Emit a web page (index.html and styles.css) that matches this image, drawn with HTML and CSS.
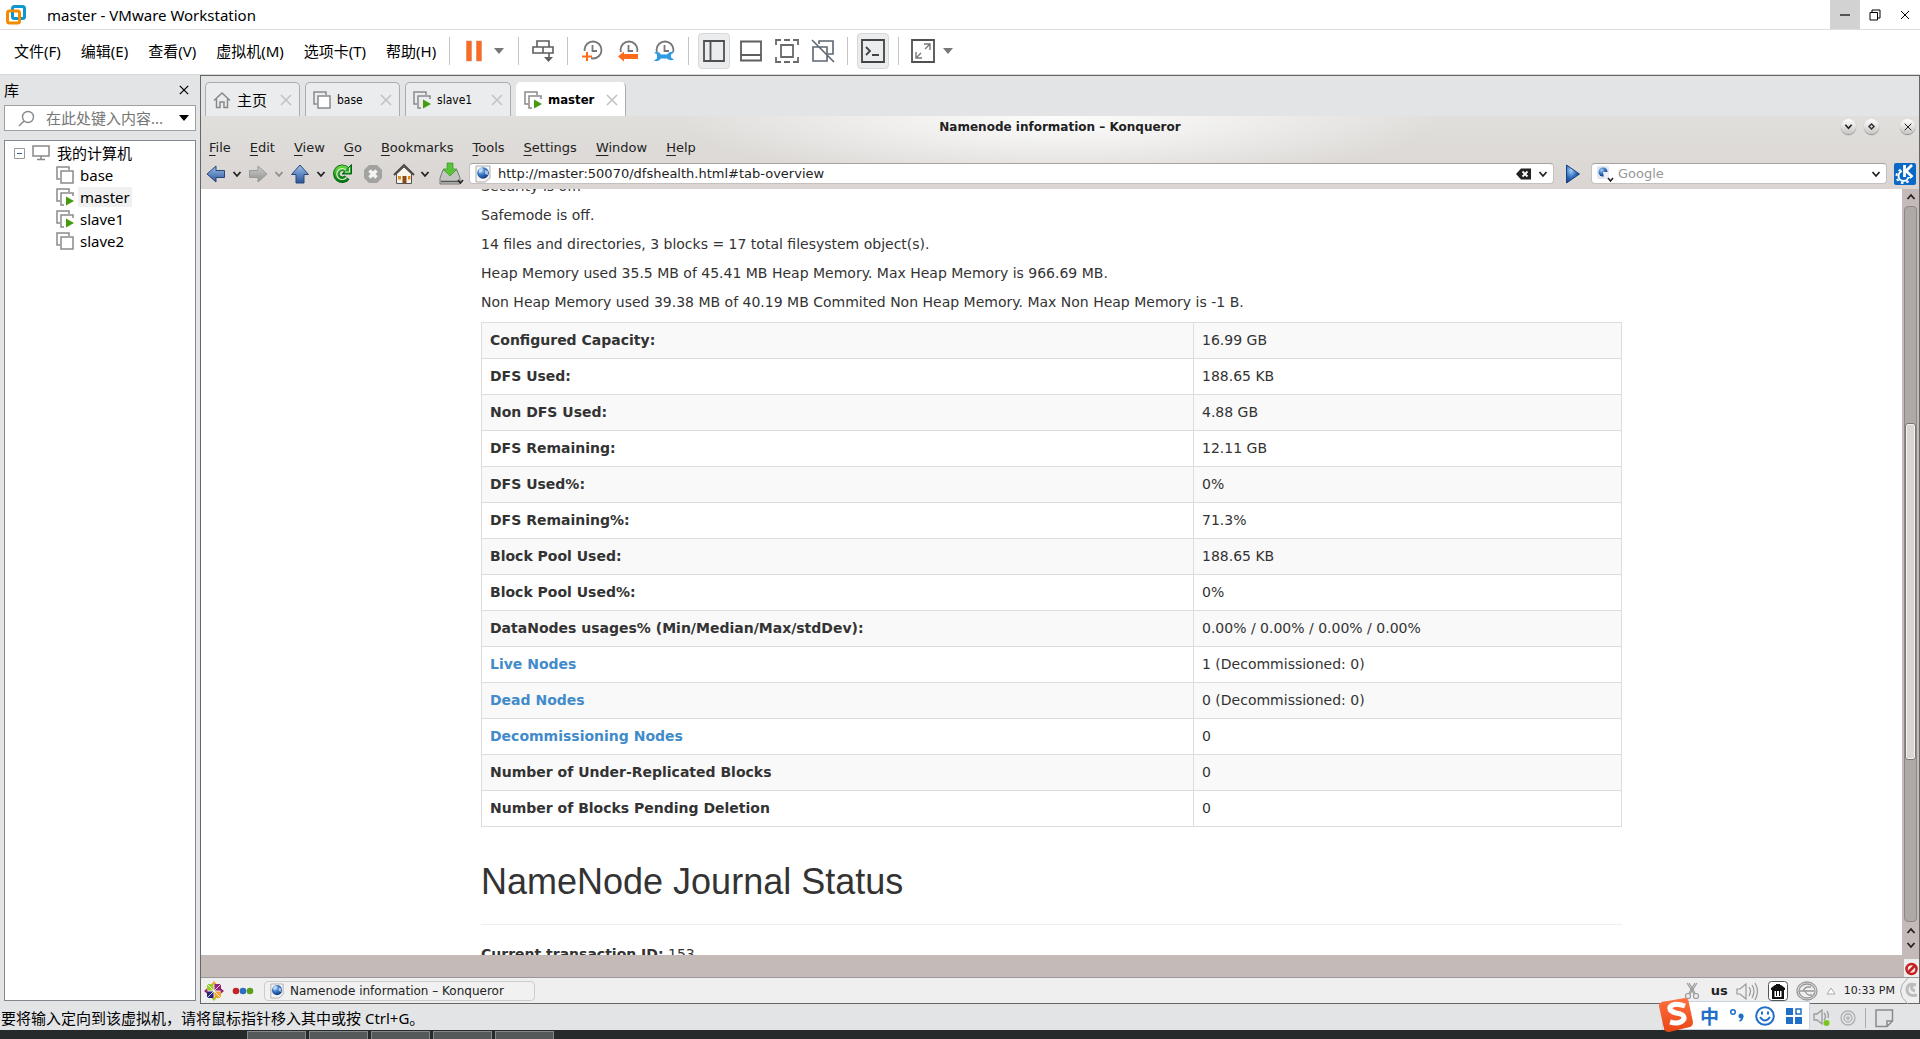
FILE: index.html
```html
<!DOCTYPE html>
<html lang="zh-CN">
<head>
<meta charset="utf-8">
<title>master - VMware Workstation</title>
<link rel="stylesheet" href="styles.css">
</head>
<body>
<svg class="defs" aria-hidden="true">
  <defs>
    <linearGradient id="blue" x1="0" y1="0" x2="0" y2="1"><stop offset="0" stop-color="#9cc0ee"/><stop offset="1" stop-color="#2c5596"/></linearGradient>
    <linearGradient id="grey" x1="0" y1="0" x2="0" y2="1"><stop offset="0" stop-color="#cfcfcd"/><stop offset="1" stop-color="#8e8e8c"/></linearGradient>
    <linearGradient id="green" x1="0" y1="0" x2="0" y2="1"><stop offset="0" stop-color="#5fd040"/><stop offset="1" stop-color="#077a12"/></linearGradient>
    <radialGradient id="ball" cx=".35" cy=".3" r=".8"><stop offset="0" stop-color="#a9cdf5"/><stop offset=".5" stop-color="#2f6fc0"/><stop offset="1" stop-color="#0b2c6b"/></radialGradient>
    <linearGradient id="sogou" x1="0" y1="0" x2="0" y2="1"><stop offset="0" stop-color="#ff7040"/><stop offset="1" stop-color="#ea4615"/></linearGradient>
    <symbol id="vm" viewBox="0 0 18 18"><path d="M4 13H1V1h12v3" fill="none" stroke="#8a8a8a" stroke-width="1.5"/><rect x="5" y="5" width="12" height="12" fill="#fff" stroke="#8a8a8a" stroke-width="1.5"/></symbol>
    <symbol id="vmrun" viewBox="0 0 18 18"><path d="M4 13H1V1h12v3M8 17H5V5h12v3" fill="none" stroke="#8a8a8a" stroke-width="1.5"/><path d="M10 8.500l8 4.500-8 4.500z" fill="#469a0e"/></symbol>
    <symbol id="chev" viewBox="0 0 10 10"><path d="M1.500 3l3.500 4 3.500-4" fill="none" stroke="currentColor" stroke-width="1.800"/></symbol>
    <symbol id="caret" viewBox="0 0 10 6"><path d="M0 0h10L5 6z" fill="currentColor"/></symbol>
    <symbol id="x" viewBox="0 0 12 12"><path d="M1 1l10 10M11 1L1 11" fill="none" stroke="currentColor" stroke-width="1.500"/></symbol>
    <symbol id="clock" viewBox="0 0 22 22"><circle cx="12" cy="10" r="8.500" fill="none" stroke="#777" stroke-width="1.800"/><path d="M11.500 5v6H16" fill="none" stroke="#777" stroke-width="1.800"/></symbol>
    <symbol id="globe" viewBox="0 0 16 18"><path d="M1 1h14v12l-5 4H1z" fill="#f6f6f6" stroke="#aaa"/><circle cx="8" cy="8" r="5.800" fill="url(#ball)"/><path d="M4 4q3-2 4 0l-1 3-3 1zM10 5l3 1v4l-3-1z" fill="#cfe3fa" opacity=".75"/></symbol>
  </defs>
</svg>

<header class="titlebar">
  <svg class="logo" viewBox="0 0 20 20"><rect x="6.500" y="1.500" width="12" height="12" rx="2" fill="none" stroke="#0f95cf" stroke-width="3"/><rect x="1.500" y="6" width="12" height="12" rx="2" fill="none" stroke="#f38b00" stroke-width="3"/><path d="M6.500 7v5q0 1.500 1.500 1.500h4" fill="none" stroke="#0f95cf" stroke-width="2"/></svg>
  <h1 class="apptitle">master - VMware Workstation</h1>
  <div class="winbtns">
    <button class="winbtn minimize" aria-label="最小化"><svg width="12" height="12"><path d="M1 6h10" stroke="#000" stroke-width="1.200"/></svg></button>
    <button class="winbtn" aria-label="还原"><svg width="12" height="12"><path d="M1 3.500h7.500V11H1zM3 3V1h8v8H9" fill="none" stroke="#000"/></svg></button>
    <button class="winbtn" aria-label="关闭"><svg width="12" height="12"><path d="M2 2l8 8M10 2l-8 8" stroke="#000"/></svg></button>
  </div>
</header>

<div class="menubar">
  <nav class="hostmenu">
    <button>文件(F)</button><button>编辑(E)</button><button>查看(V)</button><button>虚拟机(M)</button><button>选项卡(T)</button><button>帮助(H)</button>
  </nav>
  <div class="tools">
    <span class="sep"></span>
    <button class="tool" aria-label="暂停"><svg width="18" height="22"><path d="M1.500 1h5v20h-5zM11.500 1h5v20h-5z" fill="#ff6a1c" stroke="#c98e6d" stroke-width=".6"/></svg></button>
    <button class="drop" aria-label="电源选项"><svg width="10" height="6"><use href="#caret"/></svg></button>
    <span class="sep"></span>
    <button class="tool" aria-label="发送按键"><svg width="22" height="22" viewBox="0 0 22 22" fill="none" stroke="#5e5e60" stroke-width="1.600"><path d="M5 7V1h12v6M1 7h10v6H1zM11 7h10v6H11zM17 13v6"/><path d="M12 17h9l-4.500 5z" fill="#5e5e60" stroke="none"/></svg></button>
    <span class="sep"></span>
    <div class="group">
      <button class="tool" aria-label="拍摄快照"><svg width="22" height="22"><use href="#clock"/><path d="M0 11h10v9H0z" fill="#fff"/><path d="M6 12v9M1 16.500h10" stroke="#ff6a1c" stroke-width="2"/></svg></button>
      <button class="tool" aria-label="恢复快照"><svg width="22" height="22"><use href="#clock"/><path d="M0 12h22v10H0z" fill="#fff"/><path d="M1 16.500l6-5V14h14v5H7v2.500z" fill="#ff6a1c"/></svg></button>
      <button class="tool" aria-label="管理快照"><svg width="22" height="22"><use href="#clock"/><path d="M0 12h22v10H0z" fill="#fff"/><path d="M1 12.500q5-1.500 7 2h6q3-4 7-2l-3 2v3l3 2q-4 2-7-1H8q-3 4-7 2l3-2v-4z" fill="#2f9be0"/></svg></button>
    </div>
    <span class="sep"></span>
    <div class="group">
      <button class="tool on" aria-label="显示库"><svg width="22" height="22"><path d="M1 1h20v20H1zM7.500 1v20" fill="none" stroke="#505052" stroke-width="1.800"/></svg></button>
      <button class="tool" aria-label="缩略图栏"><svg width="22" height="22"><path d="M1 1.500h20v19H1zM1 15h20" fill="none" stroke="#5e5e60" stroke-width="1.800"/></svg></button>
      <button class="tool" aria-label="全屏"><svg width="24" height="24"><path d="M1 6V1h5M9 1h6M18 1h5v5M23 18v5h-5M15 23H9M6 23H1v-5M6 6h12v12H6z" fill="none" stroke="#6a6a6c" stroke-width="1.800"/></svg></button>
      <button class="tool" aria-label="Unity"><svg width="24" height="24" fill="none" stroke="#5e6670" stroke-width="1.600"><path d="M8 5V2h14v13h-5M2 8h14v14H2zM1 1l22 22"/></svg></button>
    </div>
    <span class="sep"></span>
    <button class="tool on" aria-label="控制台视图"><svg width="24" height="24" fill="none" stroke="#434345" stroke-width="1.800"><path d="M1 1h22v22H1z"/><path d="M5 8l4 4-4 4M11 16h7"/></svg></button>
    <span class="sep"></span>
    <button class="tool" aria-label="自由拉伸"><svg width="24" height="24" fill="none" stroke="#505052" stroke-width="1.800"><path d="M1 1h22v22H1z"/><path d="M5 13v6h6M13 5h6v6M19 5l-5 5M5 19l5-5" stroke-width="1.400" stroke="#777"/></svg></button>
    <button class="drop" aria-label="拉伸选项"><svg width="10" height="6"><use href="#caret"/></svg></button>
  </div>
</div>

<main class="workspace">
  <aside class="library">
    <div class="libhead"><h2>库</h2><button aria-label="关闭库"><svg width="10" height="10"><use href="#x"/></svg></button></div>
    <div class="search">
      <svg width="17" height="17" fill="none" stroke="#888" stroke-width="1.400"><circle cx="10" cy="7" r="5.500"/><path d="M6 11l-5 5"/></svg>
      <input type="text" aria-label="搜索" placeholder="在此处键入内容...">
      <svg class="black" width="12" height="6"><use href="#caret"/></svg>
    </div>
    <ul class="tree">
      <li class="root"><svg width="11" height="11"><path d="M.5.500h10v10H.5z" fill="#fff" stroke="#999"/><path d="M3 5.500h5" stroke="#3c5aa0"/></svg><svg width="18" height="16" fill="none" stroke="#888" stroke-width="1.500"><path d="M1 1h16v10H1zM9 11v3M5 14.500h8"/></svg><span>我的计算机</span></li>
      <li><svg width="18" height="18"><use href="#vm"/></svg><span>base</span></li>
      <li><svg width="18" height="18"><use href="#vmrun"/></svg><span class="current">master</span></li>
      <li><svg width="18" height="18"><use href="#vmrun"/></svg><span>slave1</span></li>
      <li><svg width="18" height="18"><use href="#vm"/></svg><span>slave2</span></li>
    </ul>
  </aside>

  <section class="console">
    <div class="tabs">
      <div class="tab"><svg width="18" height="18" fill="none" stroke="#888" stroke-width="1.500"><path d="M1 9.500L9 2l8 7.500M3.500 8v8.500H7V11h4v5.500h3.500V8"/></svg><span class="cjk">主页</span><button aria-label="关闭"><svg width="12" height="12"><use href="#x"/></svg></button></div>
      <div class="tab"><svg width="18" height="18"><use href="#vm"/></svg><span>base</span><button aria-label="关闭"><svg width="12" height="12"><use href="#x"/></svg></button></div>
      <div class="tab wide"><svg width="18" height="18"><use href="#vmrun"/></svg><span>slave1</span><button aria-label="关闭"><svg width="12" height="12"><use href="#x"/></svg></button></div>
      <div class="tab active"><svg width="18" height="18"><use href="#vmrun"/></svg><span>master</span><button aria-label="关闭"><svg width="12" height="12"><use href="#x"/></svg></button></div>
    </div>

    <div class="guest">
      <div class="chrome">
        <div class="gtitle">
          <h2>Namenode information – Konqueror</h2>
          <div class="orbs">
            <button class="orb" aria-label="Minimize"><svg width="9" height="9"><use href="#chev"/></svg></button>
            <button class="orb" aria-label="Maximize"><svg width="9" height="9"><path d="M4.500 2L7 4.500 4.500 7 2 4.500z" fill="none" stroke="#333" stroke-width="1.500"/></svg></button>
            <button class="orb last" aria-label="Close"><svg width="8" height="8"><use href="#x"/></svg></button>
          </div>
        </div>
        <nav class="gmenu">
          <button><u>F</u>ile</button><button><u>E</u>dit</button><button><u>V</u>iew</button><button><u>G</u>o</button><button><u>B</u>ookmarks</button><button><u>T</u>ools</button><button><u>S</u>ettings</button><button><u>W</u>indow</button><button><u>H</u>elp</button>
        </nav>
        <div class="gtools">
          <div class="navs">
            <button class="nav" aria-label="Back"><svg width="20" height="20"><path d="M1 10l9-8v4.500h8.500v7H10V18z" fill="url(#blue)" stroke="#27477c"/></svg></button>
            <button class="more" aria-label="Back history"><svg width="10" height="10"><use href="#chev"/></svg></button>
            <button class="nav" aria-label="Forward"><svg width="20" height="20"><path d="M19 10l-9-8v4.500H1.500v7H10V18z" fill="url(#grey)" stroke="#999"/></svg></button>
            <button class="more dim" aria-label="Forward history"><svg width="10" height="10"><use href="#chev"/></svg></button>
            <button class="nav" aria-label="Up"><svg width="20" height="20"><path d="M10 1l8.500 9.500H14V19H6v-8.500H1.500z" fill="url(#blue)" stroke="#27477c"/></svg></button>
            <button class="more" aria-label="Up levels"><svg width="10" height="10"><use href="#chev"/></svg></button>
            <button class="nav" aria-label="Reload"><svg width="20" height="20"><path d="M15 13.500a6 6 0 1 1-.5-8" fill="none" stroke="#056313" stroke-width="6.500"/><path d="M19.500.500v9.500H10z" fill="#1d9a20" stroke="#056313"/><path d="M15 13.500a6 6 0 1 1-.5-8" fill="none" stroke="url(#green)" stroke-width="5"/><path d="M14.500 13.500a5.500 5.500 0 1 1-.5-7.500M17.500 3.500V8H13" fill="none" stroke="#d6f5cc" stroke-width="1.200"/></svg></button>
            <button class="nav gapped" aria-label="Stop"><svg width="20" height="20"><path d="M6 1h8l5 5v8l-5 5H6l-5-5V6z" fill="#a2a2a0"/><path d="M6.500 6.500l7 7M13.500 6.500l-7 7" stroke="#f4f4f4" stroke-width="3.500"/></svg></button>
            <button class="nav gapped" aria-label="Home"><svg width="22" height="22"><path d="M3.500 11v9.500h15V11L11 4z" fill="#f8f4ea" stroke="#555"/><path d="M1 12L11 2l10 10" fill="none" stroke="#444" stroke-width="1.800"/><path d="M9.500 13h4v7h-4z" fill="#8a4a16"/><path d="M5 13h3v3.500H5zM15 13h2.500v3.500H15z" fill="#e08a20"/></svg></button>
            <button class="more" aria-label="Home options"><svg width="10" height="10"><use href="#chev"/></svg></button>
            <button class="nav save" aria-label="Save"><svg width="25" height="24"><path d="M4 8h14l3 8v6H1v-6z" fill="#c4c4c2" stroke="#777"/><path d="M2 19.500h18" stroke="#555" stroke-width="1.500"/><path d="M8 1h6v6h4l-7 7-7-7h4z" fill="#58c43a" stroke="#3d9427" stroke-width=".7"/><path d="M19 18l2.500 3 2.500-3" fill="none" stroke="#222" stroke-width="1.500"/></svg></button>
          </div>
          <div class="field address">
            <svg width="16" height="18"><use href="#globe"/></svg>
            <input type="text" aria-label="Location" value="http://master:50070/dfshealth.html#tab-overview">
            <svg width="15" height="12"><path d="M0 6l5-5.500h10v11H5z" fill="#222"/><path d="M6.500 3.500l5 5M11.500 3.500l-5 5" stroke="#fff" stroke-width="1.800"/></svg>
            <svg width="10" height="10"><use href="#chev"/></svg>
          </div>
          <button class="go" aria-label="Go"><svg width="16" height="20"><path d="M1.500 1l13 9-13 9z" fill="url(#ball)" stroke="#17417f"/></svg></button>
          <div class="field websearch">
            <svg width="18" height="18"><rect x="0" y="1" width="12" height="13" rx="2" fill="#e2e6ee"/><circle cx="6" cy="7" r="4.500" fill="url(#ball)"/><path d="M6 7h6v6H7z" fill="#eceff5"/><path d="M11 13l2.500 3 2.500-3" fill="none" stroke="#222" stroke-width="1.500"/></svg>
            <input type="text" aria-label="Web search" placeholder="Google">
            <svg width="10" height="10"><use href="#chev"/></svg>
          </div>
          <svg class="kde" width="22" height="22"><rect width="22" height="22" rx="2" fill="#0a68c6"/><circle cx="9.500" cy="13" r="5" fill="none" stroke="#fff" stroke-width="2"/><circle cx="9.500" cy="13" r="7" fill="none" stroke="#fff" stroke-width="2" stroke-dasharray="2.500 3"/><path d="M8 1h13v13H8z" fill="#0a68c6"/><path d="M10.500 2v12M18 2l-6 6 6.500 6" fill="none" stroke="#fff" stroke-width="2.800"/></svg>
        </div>
      </div>

      <div class="viewport">
        <article class="page">
          <div class="container">
            <p>Security is off.</p>
            <p>Safemode is off.</p>
            <p>14 files and directories, 3 blocks = 17 total filesystem object(s).</p>
            <p>Heap Memory used 35.5 MB of 45.41 MB Heap Memory. Max Heap Memory is 966.69 MB.</p>
            <p>Non Heap Memory used 39.38 MB of 40.19 MB Commited Non Heap Memory. Max Non Heap Memory is -1 B.</p>
            <table class="summary">
              <tr><th scope="row">Configured Capacity:</th><td>16.99 GB</td></tr>
              <tr><th scope="row">DFS Used:</th><td>188.65 KB</td></tr>
              <tr><th scope="row">Non DFS Used:</th><td>4.88 GB</td></tr>
              <tr><th scope="row">DFS Remaining:</th><td>12.11 GB</td></tr>
              <tr><th scope="row">DFS Used%:</th><td>0%</td></tr>
              <tr><th scope="row">DFS Remaining%:</th><td>71.3%</td></tr>
              <tr><th scope="row">Block Pool Used:</th><td>188.65 KB</td></tr>
              <tr><th scope="row">Block Pool Used%:</th><td>0%</td></tr>
              <tr><th scope="row">DataNodes usages% (Min/Median/Max/stdDev):</th><td>0.00% / 0.00% / 0.00% / 0.00%</td></tr>
              <tr><th scope="row"><a href="#tab-datanode">Live Nodes</a></th><td>1 (Decommissioned: 0)</td></tr>
              <tr><th scope="row"><a href="#tab-datanode">Dead Nodes</a></th><td>0 (Decommissioned: 0)</td></tr>
              <tr><th scope="row"><a href="#tab-datanode">Decommissioning Nodes</a></th><td>0</td></tr>
              <tr><th scope="row">Number of Under-Replicated Blocks</th><td>0</td></tr>
              <tr><th scope="row">Number of Blocks Pending Deletion</th><td>0</td></tr>
            </table>
            <h1 class="pagehead">NameNode Journal Status</h1>
            <p><b>Current transaction ID:</b> 153</p>
          </div>
        </article>
        <div class="scrollbar">
          <svg width="10" height="10"><path d="M1.500 7L5 3l3.500 4" fill="none" stroke="#222" stroke-width="1.800"/></svg>
          <div class="track"><div class="thumb"></div></div>
          <svg width="10" height="10"><path d="M1.500 7L5 3l3.500 4" fill="none" stroke="#222" stroke-width="1.800"/></svg>
          <svg width="10" height="10"><use href="#chev"/></svg>
        </div>
      </div>

      <div class="desktop"><svg width="15" height="18"><rect width="15" height="18" fill="#eee"/><circle cx="7.500" cy="10" r="5" fill="#f5e5e5" stroke="#c42020" stroke-width="2.500"/><path d="M4 13.500l7-7" stroke="#c42020" stroke-width="2.500"/></svg></div>

      <footer class="panel">
        <svg width="20" height="20" viewBox="0 0 20 20"><path d="M10 0l3 3.500H7z" fill="#f0a52c"/><path d="M20 10l-3.500 3V7z" fill="#932279"/><path d="M10 20l-3-3.500h6z" fill="#9ccd2a"/><path d="M0 10l3.500-3v6z" fill="#932279"/><path d="M3 3h6.500v6.500H3z" fill="#9ccd2a"/><path d="M10.500 3H17v6.500h-6.500z" fill="#932279"/><path d="M3 10.500h6.500V17H3z" fill="#262577"/><path d="M10.500 10.500H17V17h-6.500z" fill="#f0a52c"/><path d="M3 3l14 14M17 3L3 17" stroke="#fff" stroke-width=".8"/></svg>
        <svg width="22" height="10"><circle cx="4" cy="5" r="3.300" fill="#c32424"/><circle cx="11" cy="5" r="3.300" fill="#2b6cc4"/><circle cx="18" cy="5" r="3.300" fill="#5aa020"/></svg>
        <button class="task"><svg width="14" height="16"><use href="#globe"/></svg>Namenode information – Konqueror</button>
        <div class="tray">
          <svg width="20" height="18" fill="none" stroke="#999" stroke-width="1.200"><path d="M4 1l7 11M14 1L7 12"/><path d="M6 1l6 10M12 1L6 11"/><circle cx="5" cy="14" r="2.500"/><circle cx="13" cy="14" r="2.500"/></svg>
          <b>us</b>
          <svg width="24" height="20" fill="none" stroke="#999" stroke-width="1.200"><path d="M1 8v5h3l6 5V3L4 8z"/><path d="M13 6q3 4 0 9M16 4q4 6 0 13M19 2q5 8 0 17"/></svg>
          <svg width="20" height="20"><rect x=".5" y=".5" width="19" height="19" rx="3" fill="#fff" stroke="#555"/><path d="M3 7l4-3h1V3h4v1h1l4 3v2h-1v9H4V9H3z" fill="#111"/><path d="M6.500 10h7v6h-7z" fill="#fff"/><path d="M8.500 10v5M11.500 10v5" stroke="#111"/></svg>
          <svg width="22" height="20" fill="none" stroke="#999" stroke-width="1.300"><ellipse cx="11" cy="10" rx="10" ry="9"/><ellipse cx="11" cy="10" rx="8" ry="7"/><path d="M3 10h15M7 10q2-4 5-4h3M9 10q2 4 4 4h3"/></svg>
          <svg width="10" height="8"><path d="M5 1l4 6H1z" fill="#fff" stroke="#aaa"/></svg>
          <time>10:33 PM</time>
          <svg class="cashew" width="20" height="26" fill="none"><path d="M9 0Q-6 13 9 26" stroke="#aaa"/><path d="M17 7q-9-3-9 5 1 7 10 5M14 7q-4 4 2 6" stroke="#bcbcbc" stroke-width="3"/></svg>
        </div>
      </footer>
    </div>
  </section>
</main>

<footer class="statusbar">
  <span>要将输入定向到该虚拟机，请将鼠标指针移入其中或按 Ctrl+G。</span>
  <div class="devices">
    <svg width="18" height="18" fill="none" stroke="#999" stroke-width="1.300"><path d="M1 5v6h3l5 4V1L4 5zM11 4q3 3 0 7M14 2q2 3 1 7"/><circle cx="13.500" cy="14" r="3" fill="#7ac51c" stroke="none"/></svg>
    <svg width="16" height="16" fill="none" stroke="#b0b0b0" stroke-width="1.300"><circle cx="8" cy="8" r="7"/><circle cx="8" cy="8" r="4"/><circle cx="8" cy="8" r="1.200"/></svg>
    <span class="bar"></span>
    <svg width="19" height="19" fill="none" stroke="#8a8a8a" stroke-width="1.500"><path d="M1 1h16.500v11L12 17.500H1zM17.500 12H12v5.500"/></svg>
  </div>
</footer>

<div class="ime">
  <svg class="sogou" width="36" height="36"><path d="M4 5l23-4q3 0 3.500 3L35 25q0 4-3 5L11 35q-4 0-5-3L1 9q0-3 3-4z" fill="url(#sogou)"/><path d="M27 9q-11-4-15 1-1 4 6 6 9 1 8 6-4 6-14 3" fill="none" stroke="#fff" stroke-width="5"/></svg>
  <span class="zhong">中</span>
  <svg width="16" height="18"><circle cx="4" cy="5" r="2.300" fill="none" stroke="#1f6fc9" stroke-width="1.500"/><circle cx="12" cy="9" r="2.500" fill="#1f6fc9"/><path d="M13.500 9q0 4-3 5" fill="none" stroke="#1f6fc9" stroke-width="1.800"/></svg>
  <svg width="20" height="20" fill="none" stroke="#1f6fc9" stroke-width="2"><circle cx="10" cy="10" r="8.800"/><path d="M7 5.500v3M13 5.500v3M5 11q5 7 10 0"/></svg>
  <svg width="18" height="18"><path d="M1 1h7v7H1zM1 10h7v7H1zM10 10h7v7h-7z" fill="#1f6fc9"/><path d="M11 2h5v5h-5z" fill="none" stroke="#1f6fc9" stroke-width="1.500"/></svg>
</div>

<div class="taskbar"><i></i><i></i><i></i><i></i><i></i><time>14:33</time></div>
</body>
</html>
```
FILE: styles.css
```css
* { box-sizing: border-box; }
body {
  margin: 0;
  height: 100vh;
  display: flex;
  flex-direction: column;
  position: relative;
  overflow: hidden;
  background: #e3e4e6;
  color: #000;
  font: 15px/20px "Noto Sans", "Noto Sans CJK SC", sans-serif;
}
h1, h2, p, ul { margin: 0; padding: 0; font-size: inherit; font-weight: normal; }
svg { display: block; flex: none; }
button {
  display: flex;
  align-items: center;
  justify-content: center;
  padding: 0;
  border: 0;
  background: none;
  color: inherit;
  font: inherit;
  white-space: nowrap;
}
input {
  flex: 1;
  min-width: 0;
  padding: 0;
  border: 0;
  outline: 0;
  background: none;
  color: inherit;
  font: inherit;
}
.defs { position: absolute; width: 0; height: 0; }

/* host window */
.titlebar {
  display: flex;
  align-items: center;
  height: 30px;
  flex: none;
  padding-left: 6px;
  background: #fff;
  border-bottom: 1px solid #dedede;
}
.logo { width: 20px; height: 20px; }
.apptitle { flex: 1; margin-left: 21px; }
.winbtns { display: flex; align-self: stretch; }
.winbtn { width: 30px; }
.minimize { background: #d2d2d2; }
.menubar {
  display: flex;
  align-items: center;
  height: 45px;
  flex: none;
  padding: 0 0 2px 14px;
  background: #fff;
  border-bottom: 1px solid #d8d8d8;
}
.hostmenu { display: flex; gap: 20px; width: 435px; }
.tools { display: flex; align-items: center; }
.sep { width: 1px; height: 28px; margin: 0 9px; background: #c4c4c4; }
.sep:first-child { margin-left: 0; }
.group { display: flex; gap: 6px; }
.tool { width: 30px; height: 36px; }
.on { width: 32px; background: #ebecee; border: 1px solid #d6d7d9; border-radius: 4px; }
.drop { width: 20px; color: #777; }

.workspace { flex: 1; min-height: 0; display: flex; }
.library { width: 200px; flex: none; display: flex; flex-direction: column; padding: 5px 4px 3px; }
.libhead { display: flex; justify-content: space-between; align-items: center; height: 20px; padding-right: 7px; }
.search {
  display: flex;
  align-items: center;
  height: 26px;
  margin: 5px 0 9px;
  padding: 0 5px 0 13px;
  gap: 11px;
  background: #fff;
  border: 1px solid #a0a0a0;
}
.search input::placeholder { color: #757575; opacity: 1; }
.tree { flex: 1; background: #fff; border: 1px solid #828790; padding: 1px 0; list-style: none; }
.tree li { display: flex; align-items: center; height: 22px; gap: 4px; padding-left: 51px; }
.tree .root { gap: 7px; padding-left: 9px; }
.tree .root span { padding: 0; }
.tree span { padding: 0 2px; }
.tree .current { background: #f0f0f0; }

/* console tabs */
.console {
  flex: 1;
  min-width: 0;
  display: flex;
  flex-direction: column;
  border: 1px solid #666;
}
.tabs { display: flex; align-items: flex-end; gap: 5px; height: 40px; flex: none; padding-left: 4px; }
.tab {
  display: flex;
  align-items: center;
  width: 95px;
  height: 34px;
  padding: 0 7px;
  gap: 6px;
  background: #ebecee;
  border: 1px solid #aaacae;
  border-bottom: 0;
  border-radius: 5px 5px 0 0;
  font: 12px/20px "DejaVu Sans Condensed", "DejaVu Sans", sans-serif;
}
.tab .cjk { font: 15px/20px "Noto Sans CJK SC", sans-serif; }
.tab button { margin-left: auto; color: #c2c2c2; }
.wide { width: 106px; }
.active { width: 110px; background: #fff; border-color: #fff #aaacae #fff #fff; font-size: 13px; font-weight: bold; }

/* guest browser */
.guest { flex: 1; min-height: 0; display: flex; flex-direction: column; font: 13px/20px "DejaVu Sans", sans-serif; color: #222; }
.chrome {
  flex: none;
  background: radial-gradient(ellipse 380px 70px at 50% 0, #fdfdfd, rgba(250, 250, 249, 0)), linear-gradient(#e0dfdc, #dad5d2);
}
.gtitle { display: grid; grid-template-columns: 1fr auto 1fr; align-items: center; height: 21px; }
.gtitle h2 { grid-column: 2; font: bold 12px/20px "DejaVu Sans", sans-serif; }
.orbs { display: flex; justify-content: flex-end; gap: 8px; padding-right: 4px; }
.orb { width: 15px; height: 15px; border-radius: 8px; background: linear-gradient(#fff, #c8c6c3); box-shadow: 0 1px 1px #888; }
.last { margin-left: 13px; }
.gmenu { display: flex; gap: 19px; height: 21px; padding-left: 8px; }
.gmenu button { display: block; }
.gmenu u { text-underline-offset: 3px; }
.gtools { display: flex; align-items: center; height: 31px; padding: 0 3px; }
.navs { display: flex; align-items: center; margin-right: 6px; }
.nav { width: 24px; height: 24px; }
.gapped { margin-left: 7px; }
.save { margin-left: 5px; }
.more { width: 18px; }
.dim { color: #8e8c8a; }
.field {
  display: flex;
  align-items: center;
  height: 21px;
  gap: 7px;
  padding: 0 5px;
  background: #fff;
  border: 1px solid #c4c1be;
  border-top-color: #a5a29f;
  border-radius: 4px;
}
.address { flex: 1; }
.go { margin: 0 10px 0 11px; }
.websearch { width: 296px; gap: 3px; }
.websearch input::placeholder { color: #979797; opacity: 1; }
.kde { margin-left: 7px; }

.viewport { flex: 1; min-height: 0; display: flex; background: #fff; }
.page { flex: 1; min-width: 0; overflow: hidden; font: 14px/19px "DejaVu Sans", sans-serif; color: #333; }
.container { max-width: 1171px; margin: -12px auto 0; padding: 0 15px; }
.container p { margin-bottom: 10px; }
.summary { width: 100%; border-collapse: collapse; table-layout: fixed; }
.summary th, .summary td { height: 36px; padding: 0 8px; border: 1px solid #ddd; text-align: left; }
.summary th { width: 712px; }
.summary tr:nth-child(odd) { background: #f9f9f9; }
a { color: #428bca; text-decoration: none; }
.pagehead {
  margin: 35px 0 20px;
  padding-bottom: 22px;
  border-bottom: 1px solid #eee;
  font: 36px/40px "Liberation Sans", Arial, sans-serif;
}
.scrollbar {
  width: 17px;
  flex: none;
  display: flex;
  flex-direction: column;
  align-items: center;
  gap: 4px;
  padding: 3px 0 5px;
  background: #c4bab7;
}
.track {
  flex: 1;
  width: 13px;
  display: flex;
  flex-direction: column;
  background: #b0a8a5;
  border: 1px solid #8e8885;
  border-radius: 4px;
}
.track::before { content: ""; flex: 218; }
.thumb { flex: 338; background: #dad6d2; border: 1px solid #777; border-radius: 3px; box-shadow: inset 0 0 0 1px #f4f2f0; }
.track::after { content: ""; flex: 163; }
.desktop { display: flex; justify-content: flex-end; align-items: flex-end; height: 22px; flex: none; background: #c4bab7; }
.panel {
  display: flex;
  align-items: center;
  height: 26px;
  flex: none;
  padding-left: 3px;
  gap: 8px;
  background: #efefef;
  border-top: 1px solid #999;
}
.task {
  width: 271px;
  height: 20px;
  margin-left: 2px;
  justify-content: flex-start;
  gap: 6px;
  padding-left: 5px;
  border: 1px solid #ccc;
  border-radius: 4px;
  background: #f1f1f1;
  font: 12px/18px "DejaVu Sans", sans-serif;
}
.tray { display: flex; align-items: center; gap: 8px; margin-left: auto; }
.tray time { font: 11px/18px "DejaVu Sans", sans-serif; }
.cashew { margin-left: -4px; }

.statusbar { display: flex; align-items: center; justify-content: space-between; height: 26px; flex: none; padding: 2px 26px 0 1px; }
.devices { display: flex; align-items: center; gap: 9px; }
.bar { width: 1px; height: 20px; background: #aaa; }

/* input method bar floating over the window */
.ime {
  position: absolute;
  right: 110px;
  bottom: 9px;
  display: flex;
  align-items: center;
  gap: 10px;
  height: 29px;
  padding: 0 6px 0 37px;
  background: #fff;
  border: 1px solid #c9d3e4;
}
.sogou { position: absolute; left: -5px; top: -5px; }
.zhong { color: #1f6fc9; font: bold 19px/24px "Noto Sans CJK SC", sans-serif; }

.taskbar { display: flex; gap: 3px; height: 9px; flex: none; overflow: hidden; padding: 1px 102px 0 247px; background: #262a2b; }
.taskbar i { width: 59px; height: 20px; background: #555959; border: 1px solid #858888; }
.taskbar time { margin: 3px 0 0 auto; color: #fff; font: 13px/18px "Noto Sans", sans-serif; }
```
